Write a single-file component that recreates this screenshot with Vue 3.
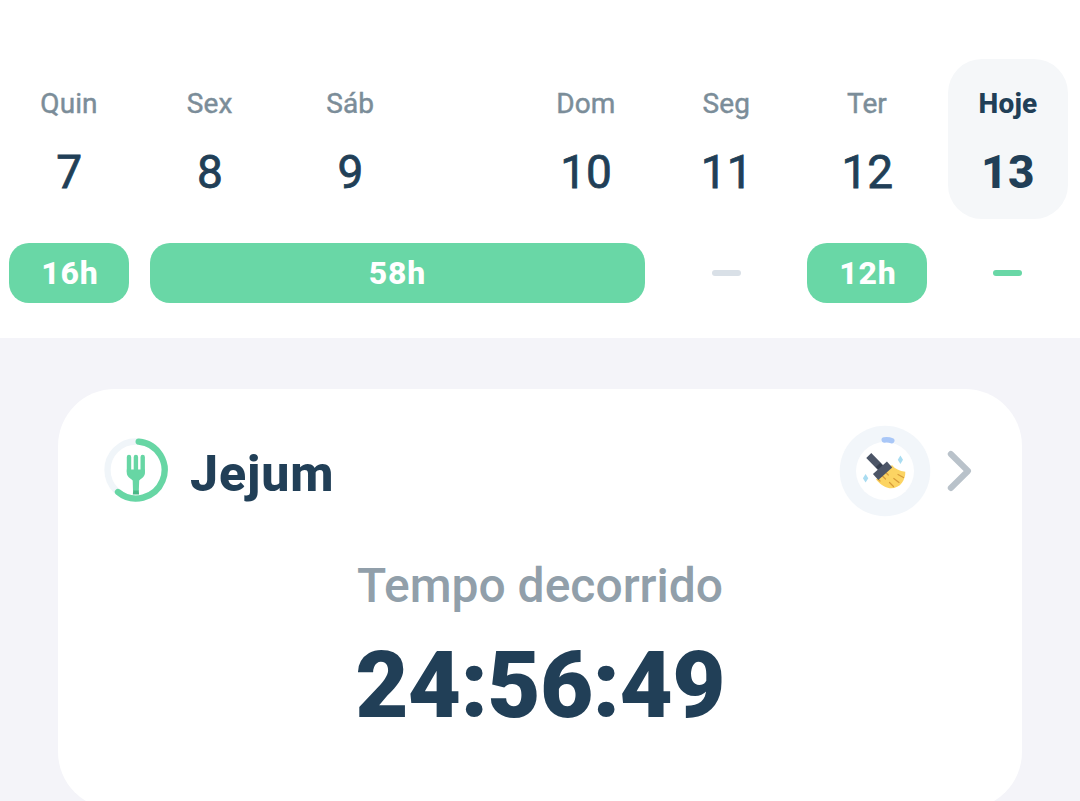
<template>
  <div class="screen">
    <section class="week">
      <div
        v-for="day in days"
        :key="day.number"
        class="day"
        :class="{ today: day.today, 'new-week': day.newWeek }"
      >
        <span class="day-name">{{ day.name }}</span>
        <span class="day-number">{{ day.number }}</span>
      </div>

      <div
        v-for="fast in fasts"
        :key="fast.id"
        class="fast"
        :class="[fast.type, fast.id]"
      >
        <template v-if="fast.label">{{ fast.label }}</template>
        <span v-else class="dash"></span>
      </div>
    </section>

    <main class="content">
      <article class="card">
        <header class="card-header">
          <svg class="fork-icon" viewBox="0 0 64 64" fill="none">
            <circle cx="32" cy="32" r="28.5" stroke="#f0f5f9" stroke-width="6.3" />
            <path
              d="M34.7 3.6A28.5 28.5 0 1 1 14 54"
              stroke="#67d6a4"
              stroke-width="6.3"
              stroke-linecap="round"
            />
            <path
              d="M25 19V34M31.9 19V36M38.7 19V34"
              stroke="#67d6a4"
              stroke-width="4.4"
              stroke-linecap="round"
            />
            <path d="M22.8 31.5H40.9V35C40.9 38.5 38 40 35.2 42.5L34.8 53H29L28.7 42.5C26 40 22.8 38.5 22.8 35Z" fill="#67d6a4" />
            <path d="M29.2 52.5H34.8L35 56.5H28.8Z" fill="#48b886" />
          </svg>
          <h1 class="title">Jejum</h1>

          <div class="stage">
            <svg viewBox="0 0 92 92" fill="none">
              <circle cx="46" cy="46" r="45.3" fill="#f2f6fa" />
              <circle cx="46" cy="46" r="29" fill="#fff" />
              <path d="M45.2 15Q49.5 14.4 52.8 15.8" stroke="#a9c7f7" stroke-width="5.4" stroke-linecap="round" />
              <path d="M61.4 30.5L64 34.8L61.4 39L58.8 34.8ZM26.6 49L29.3 53.2L26.6 57.4L23.9 53.2Z" fill="#a9dcf1" />
              <path d="M37 54.5L53 40C56 44 60.5 46 66.3 46.7C66.5 51 65 55 63 57.8C59 63.5 51 64.8 45.5 61.5C42 59.5 39 57 37 54.5Z" fill="#fcd462" />
              <path
                d="M50.5 57.5L54.5 61.5M54.8 53.5L60 57.5M59 49.5L64.5 52.5M43.5 51L46.5 54M47.3 48L49.3 50M39.5 54.5L41 56"
                stroke="#d79b39"
                stroke-width="1.2"
                stroke-linecap="round"
              />
              <path d="M32.2 33L40 41" stroke="#4c5567" stroke-width="7" stroke-linecap="square" stroke-linejoin="round" />
              <path d="M39 40L44 45" stroke="#343d4e" stroke-width="6" />
              <path d="M36.6 52L50.6 39.6" stroke="#4c5567" stroke-width="8" stroke-linejoin="round" />
            </svg>
          </div>

          <svg class="chevron" viewBox="0 0 26 42" fill="none">
            <path d="M4.8 4L22 21L4.8 38" stroke="#b9c2ca" stroke-width="6" stroke-linecap="round" stroke-linejoin="round" />
          </svg>
        </header>

        <p class="caption">Tempo decorrido</p>
        <p class="timer">24:56:49</p>
      </article>
    </main>
  </div>
</template>

<script setup>
const days = [
  { name: 'Quin', number: 7 },
  { name: 'Sex', number: 8 },
  { name: 'Sáb', number: 9 },
  { name: 'Dom', number: 10, newWeek: true },
  { name: 'Seg', number: 11 },
  { name: 'Ter', number: 12 },
  { name: 'Hoje', number: 13, today: true }
]

const fasts = [
  { id: 'thursday', type: 'pill', label: '16h' },
  { id: 'weekend', type: 'pill', label: '58h' },
  { id: 'monday', type: 'empty' },
  { id: 'tuesday', type: 'pill', label: '12h' },
  { id: 'current', type: 'active' }
]
</script>

<style>
body {
  margin: 0;
  overflow: hidden;
}
</style>

<style scoped>
.screen {
  height: 801px;
  overflow: hidden;
  display: flex;
  flex-direction: column;
  background: #f4f4f9;
  color: #213f57;
  font-family: Roboto, sans-serif;
}

.week {
  box-sizing: border-box;
  flex: none;
  height: 338px;
  padding: 59px 0 0 9px;
  display: grid;
  /* the narrow fourth column separates the two weeks */
  grid-template-columns: repeat(3, 120px) 74.4px repeat(4, 120px);
  grid-template-rows: 160px 60px;
  column-gap: 20.6px;
  row-gap: 24px;
  background: #fff;
}

.day {
  display: flex;
  flex-direction: column;
  align-items: center;
  border-radius: 34px;
}

.new-week {
  grid-column: 5;
}

.day-name {
  margin-top: 28px;
  font-size: 28px;
  line-height: 33px;
  font-weight: 400;
  letter-spacing: 0.1px;
  color: #7b8d99;
  -webkit-text-stroke: 0.45px currentColor;
}

.day-number {
  margin-top: 25px;
  padding-left: 0.6px;
  font-size: 46px;
  line-height: 54px;
  font-weight: 400;
  -webkit-text-stroke: 0.8px currentColor;
}

.today {
  background: #f5f7f9;
}

.today .day-name {
  padding-left: 1px;
  color: #213f57;
  font-weight: 800;
  letter-spacing: 0.2px;
  -webkit-text-stroke: 0;
}

.today .day-number {
  padding-left: 1px;
  font-weight: 800;
  letter-spacing: 0.4px;
  -webkit-text-stroke: 0;
}

.fast {
  display: flex;
  align-items: center;
  justify-content: center;
  border-radius: 20px;
  font-size: 32px;
  font-weight: 800;
  letter-spacing: 0.8px;
  color: #fff;
}

.pill {
  padding-left: 2px;
  background: #69d7a6;
}

.thursday {
  grid-column: 1;
}

.weekend {
  grid-column: 2 / 6;
  padding-left: 0;
  margin-right: 0.6px;
}

.dash {
  width: 29px;
  height: 6px;
  border-radius: 3px;
  background: #d9e0e7;
}

.active .dash {
  background: #69d7a6;
}

.content {
  padding: 51px 58px 0;
}

.card {
  box-sizing: border-box;
  height: 420px;
  padding: 36px 50px 0 45.5px;
  border-radius: 57px;
  background: #fff;
}

.card-header {
  display: flex;
  align-items: center;
  height: 92px;
}

.fork-icon {
  width: 64px;
  height: 64px;
  margin-bottom: 2px;
}

.title {
  margin: 5px 0 0 22.5px;
  font-size: 50px;
  line-height: 58px;
  font-weight: 800;
  letter-spacing: 0.9px;
}

.stage {
  width: 92px;
  height: 92px;
  margin-left: auto;
}

.stage svg {
  display: block;
}

.chevron {
  width: 26px;
  height: 42px;
  margin-left: 15px;
  margin-bottom: 1px;
}

.caption {
  margin: 41px -4.5px 0 0;
  text-align: center;
  font-size: 48px;
  line-height: 56px;
  font-weight: 500;
  color: #919faa;
}

.timer {
  margin: 18px -4.5px 0 0;
  text-align: center;
  font-size: 92px;
  line-height: 108px;
  font-weight: 900;
  letter-spacing: -0.7px;
}
</style>
